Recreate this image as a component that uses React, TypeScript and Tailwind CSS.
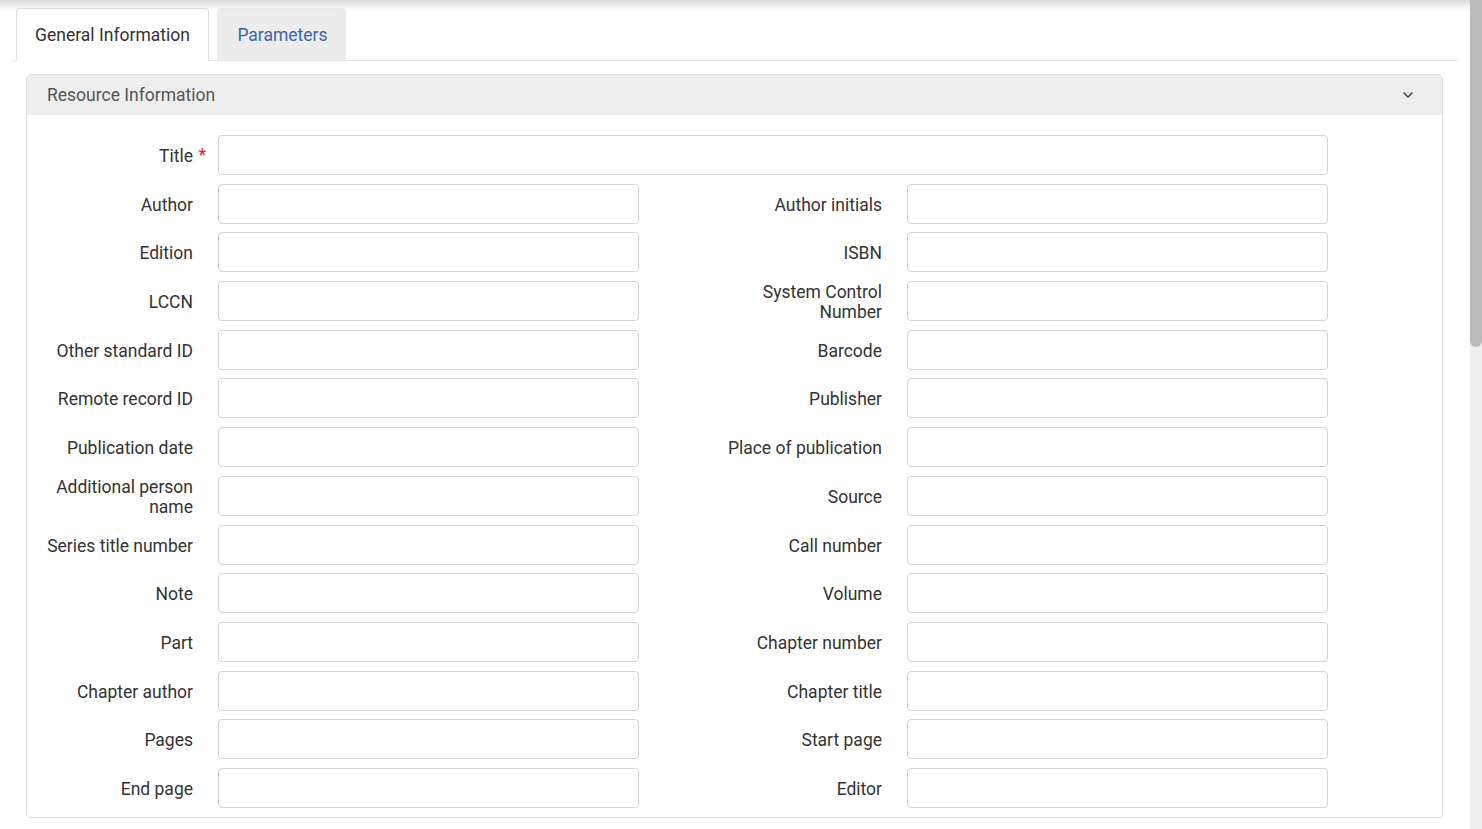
import { ChevronDown } from "lucide-react";

const rows: [string, string][] = [
  ["Author", "Author initials"],
  ["Edition", "ISBN"],
  ["LCCN", "System Control Number"],
  ["Other standard ID", "Barcode"],
  ["Remote record ID", "Publisher"],
  ["Publication date", "Place of publication"],
  ["Additional person name", "Source"],
  ["Series title number", "Call number"],
  ["Note", "Volume"],
  ["Part", "Chapter number"],
  ["Chapter author", "Chapter title"],
  ["Pages", "Start page"],
  ["End page", "Editor"],
];

function Label({ text, required }: { text: string; required?: boolean }) {
  return (
    <label className="relative flex h-[40px] items-center justify-end pt-[2px] text-right text-[17.5px] leading-[20px] text-[#333]">
      {text}
      {required && <span className="absolute right-[-13px] top-[10px] text-[#e0201b]">*</span>}
    </label>
  );
}

function Field() {
  return <input className="h-[40px] w-full rounded-[4px] border border-[#cfd3d8] bg-white outline-none" />;
}

export default function App() {
  return (
    <div className="flex h-screen w-full overflow-hidden bg-white" style={{ fontFamily: "Roboto, 'Liberation Sans', sans-serif" }}>
      <main className="relative flex-1">
        <div className="pointer-events-none absolute inset-x-0 top-0 h-[10px] bg-gradient-to-b from-[#d9d9d9] to-transparent" />

        <div className="ml-[12px] mt-[8px] flex w-[1446px] gap-[8px] border-b border-[#e2e4e8] pl-[4px]">
          <div className="-mb-px flex h-[53px] w-[193px] items-center justify-center rounded-t-[4px] border border-b-0 border-[#dcdfe3] bg-white pb-px pt-[2px] text-[17.5px] text-[#333]">
            General Information
          </div>
          <div className="flex h-[52px] w-[129px] items-center justify-center rounded-t-[4px] bg-[#ececec] pl-[2px] pt-[3px] text-[17.5px] text-[#3d64a8]">
            Parameters
          </div>
        </div>

        <section className="ml-[26px] mt-[13px] w-[1417px] rounded-[5px] border border-[#dedede]">
          <div className="flex h-[40px] items-center justify-between rounded-t-[4px] bg-[#eeeeee] pl-[20px] pr-[26px] text-[17.5px] text-[#555]">
            <span>Resource Information</span>
            <ChevronDown size={16} strokeWidth={2.5} className="text-[#444]" />
          </div>

          <div className="ml-[13px] grid grid-cols-[153px_421px_33px_160px_421px] gap-x-[25px] gap-y-[8.7px] pb-[9px] pt-[20px]">
            <Label text="Title" required />
            <div className="col-span-4">
              <Field />
            </div>
            {rows.map(([left, right]) => (
              <div key={left} className="contents">
                <Label text={left} />
                <Field />
                <div />
                <Label text={right} />
                <Field />
              </div>
            ))}
          </div>
        </section>
      </main>

      <div className="flex w-[12px] flex-col bg-[#efefef]">
        <div className="h-[347px] rounded-b-[6px] bg-[#bababa]" />
      </div>
    </div>
  );
}
